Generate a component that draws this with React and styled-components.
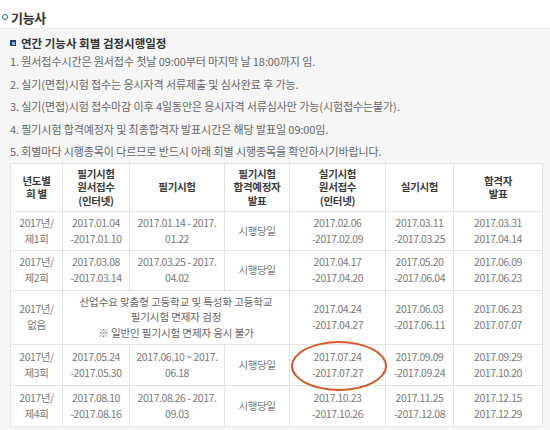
import React from 'react'
import styled, { createGlobalStyle } from 'styled-components'

const GlobalStyle = createGlobalStyle`
  body {
    margin: 0;
    background: #fff;
    font-family: "Noto Sans CJK KR", "Liberation Sans", sans-serif;
  }
`

const Page = styled.div`
  width: 550px;
  height: 430px;
  overflow: hidden;
`

const Title = styled.h2`
  display: flex;
  align-items: center;
  gap: 3px;
  margin: 0;
  padding: 6px 0 0 2px;
  height: 22px;
  font-size: 13px;
  font-weight: bold;
  color: #333;
  letter-spacing: -0.3px;
`

const Ring = styled.span`
  width: 4px;
  height: 4px;
  border: 1.5px solid #1f67b1;
  border-radius: 50%;
`

const Panel = styled.div`
  background: #f6f6f6;
  border-top: 1px solid #ebebeb;
  padding: 7px 8px 6px 10px;
`

const SubTitle = styled.h3`
  display: flex;
  align-items: center;
  gap: 5px;
  margin: 0;
  line-height: 14px;
  font-size: 11.5px;
  font-weight: bold;
  color: #333;
`

const Square = styled.span`
  width: 3px;
  height: 3px;
  background: #8fb4dc;
  border: 1px solid #243f78;
  border-width: 2px 1px 1px 2px;
`

const Notes = styled.ol`
  margin: 0;
  padding: 0;
  list-style: none;
`

const Note = styled.li`
  line-height: 22.5px;
  font-size: 11px;
  color: #666;
  letter-spacing: -0.1px;
`

const Table = styled.table`
  width: 532px;
  border-collapse: collapse;
  table-layout: fixed;
  background: #fff;
  font-size: 10.5px;
`

const Th = styled.th`
  height: 47px;
  border: 1px solid #e3e3e3;
  font-weight: bold;
  color: #3a3a3a;
  line-height: 13.5px;
  letter-spacing: -0.3px;
  padding: 0;
`

const Td = styled.td`
  position: relative;
  height: ${({ $h }) => $h}px;
  border: 1px solid #e3e3e3;
  color: ${({ $dark }) => ($dark ? '#666' : '#7a7a7a')};
  line-height: ${({ $dark }) => ($dark ? 15.5 : 16)}px;
  letter-spacing: ${({ $dark }) => ($dark ? -0.1 : -0.45)}px;
  text-align: center;
  padding: 0;
`

const Circle = styled.span`
  position: absolute;
  left: 1px;
  top: -4px;
  width: 96px;
  height: 50px;
  box-sizing: border-box;
  border: 2px solid #d35a2b;
  border-radius: 50%;
  pointer-events: none;
`

const widths = [52, 67, 95, 65, 96, 68, 89]

const head = [
  ['년도별', '회 별'],
  ['필기시험', '원서접수', '(인터넷)'],
  ['필기시험'],
  ['필기시험', '합격예정자', '발표'],
  ['실기시험', '원서접수', '(인터넷)'],
  ['실기시험'],
  ['합격자', '발표'],
]

const Lines = ({ items }) =>
  items.map((t, i) => (
    <React.Fragment key={i}>
      {i > 0 && <br />}
      {t}
    </React.Fragment>
  ))

const rows = [
  { h: 38, cells: [['2017년/', '제1회'], ['2017.01.04', '-2017.01.10'], ['2017.01.14 - 2017.', '01.22'], ['시행당일'], ['2017.02.06', '-2017.02.09'], ['2017.03.11', '-2017.03.25'], ['2017.03.31', '2017.04.14']] },
  { h: 39, cells: [['2017년/', '제2회'], ['2017.03.08', '-2017.03.14'], ['2017.03.25 - 2017.', '04.02'], ['시행당일'], ['2017.04.17', '-2017.04.20'], ['2017.05.20', '-2017.06.04'], ['2017.06.09', '2017.06.23']] },
  { h: 53, merged: true, cells: [['2017년/', '없음'], ['산업수요 맞춤형 고등학교 및 특성화 고등학교', '필기시험 면제자 검정', '※ 일반인 필기시험 면제자 응시 불가'], ['2017.04.24', '-2017.04.27'], ['2017.06.03', '-2017.06.11'], ['2017.06.23', '2017.07.07']] },
  { h: 40, circle: 4, cells: [['2017년/', '제3회'], ['2017.05.24', '-2017.05.30'], ['2017.06.10 ~ 2017.', '06.18'], ['시행당일'], ['2017.07.24', '-2017.07.27'], ['2017.09.09', '-2017.09.24'], ['2017.09.29', '2017.10.20']] },
  { h: 40, cells: [['2017년/', '제4회'], ['2017.08.10', '-2017.08.16'], ['2017.08.26 - 2017.', '09.03'], ['시행당일'], ['2017.10.23', '-2017.10.26'], ['2017.11.25', '-2017.12.08'], ['2017.12.15', '2017.12.29']] },
]

const notes = [
  '1. 원서접수시간은 원서접수 첫날 09:00부터 마지막 날 18:00까지 임.',
  '2. 실기(면접)시험 접수는 응시자격 서류제출 및 심사완료 후 가능.',
  '3. 실기(면접)시험 접수마감 이후 4일동안은 응시자격 서류심사만 가능(시험접수는불가).',
  '4. 필기시험 합격예정자 및 최종합격자 발표시간은 해당 발표일 09:00임.',
  '5. 회별마다 시행종목이 다르므로 반드시 아래 회별 시행종목을 확인하시기바랍니다.',
]

export default function App() {
  return (
    <Page>
      <GlobalStyle />
      <Title>
        <Ring />
        기능사
      </Title>
      <Panel>
        <SubTitle>
          <Square />
          연간 기능사 회별 검정시행일정
        </SubTitle>
        <Notes>
          {notes.map((n) => (
            <Note key={n}>{n}</Note>
          ))}
        </Notes>
        <Table>
          <colgroup>
            {widths.map((w, i) => (
              <col key={i} style={{ width: w }} />
            ))}
          </colgroup>
          <thead>
            <tr>
              {head.map((h, i) => (
                <Th key={i}>
                  <Lines items={h} />
                </Th>
              ))}
            </tr>
          </thead>
          <tbody>
            {rows.map((r, ri) => (
              <tr key={ri}>
                {r.cells.map((c, ci) => {
                  const merged = r.merged && ci === 1
                  return (
                    <Td key={ci} $h={r.h} $dark={merged} colSpan={merged ? 3 : 1}>
                      <Lines items={c} />
                      {r.circle === ci && <Circle />}
                    </Td>
                  )
                })}
              </tr>
            ))}
          </tbody>
        </Table>
      </Panel>
    </Page>
  )
}
